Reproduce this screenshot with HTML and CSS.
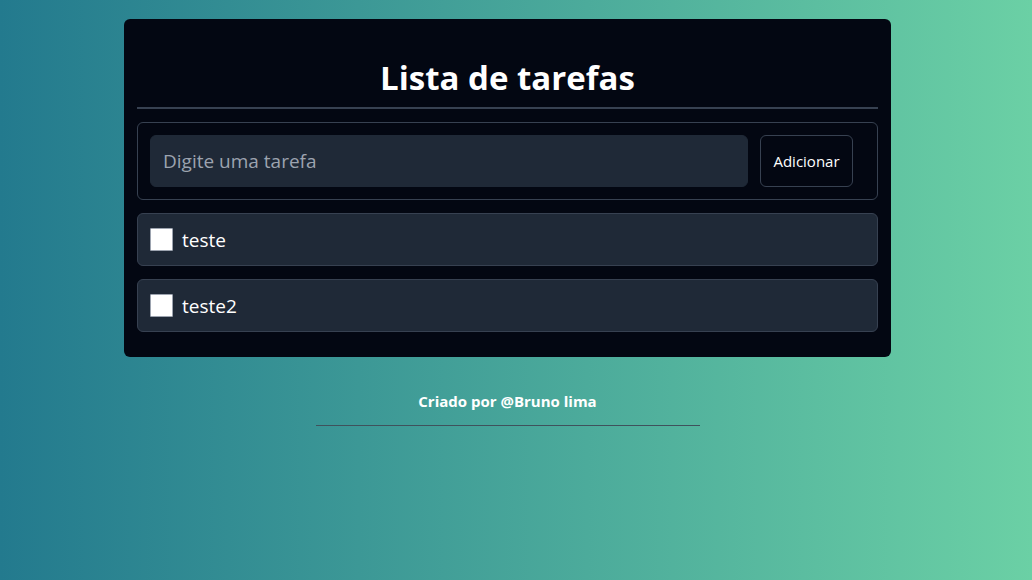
FILE: index.html
```html
<!DOCTYPE html>
<html lang="pt-BR">
<head>
<meta charset="utf-8">
<title>Lista de tarefas</title>
<link rel="stylesheet" href="styles.css">
</head>
<body>
<main class="page">
  <section class="card">
    <h1 class="title">Lista de tarefas</h1>
    <form class="form">
      <input class="input" type="text" placeholder="Digite uma tarefa">
      <button class="btn" type="button">Adicionar</button>
    </form>
    <ul class="list">
      <li class="item"><span class="check"></span><span class="label">teste</span></li>
      <li class="item"><span class="check"></span><span class="label">teste2</span></li>
    </ul>
  </section>
  <footer class="footer">
    <p class="credit">Criado por @Bruno lima</p>
    <hr class="rule">
  </footer>
</main>
</body>
</html>
```
FILE: styles.css
```css
* { box-sizing: border-box; }
html, body { margin: 0; height: 100%; }
body {
  font-family: "Open Sans", "Noto Sans", sans-serif;
  background: linear-gradient(to right, #237a8e, #6bd0a5);
  color: #fff;
}
.page {
  display: flex;
  flex-direction: column;
  align-items: center;
  padding: 19px 17px 0 0;
}
.card {
  width: 767px;
  background: #030712;
  border-radius: 6px;
  padding: 0 13px 25px;
}
.title {
  margin: 0;
  padding: 37px 0 7px;
  text-align: center;
  font-size: 33px;
  font-weight: 700;
  line-height: 44px;
  border-bottom: 2px solid #374151;
}
.form {
  margin-top: 13px;
  display: flex;
  gap: 12px;
  padding: 12px 24px 12px 12px;
  border: 1px solid #374151;
  border-radius: 6px;
}
.input {
  flex: 1;
  height: 52px;
  background: #1f2937;
  border: 1px solid #1f2937;
  border-radius: 6px;
  padding: 0 12px;
  font-family: inherit;
  font-size: 19px;
  color: #fff;
  outline: none;
}
.input::placeholder { color: #9ca3af; }
.btn {
  width: 93px;
  height: 52px;
  background: transparent;
  border: 1px solid #374151;
  border-radius: 6px;
  color: #fff;
  font-family: inherit;
  font-size: 15px;
  padding: 0;
}
.list {
  list-style: none;
  margin: 13px 0 0;
  padding: 0;
  display: flex;
  flex-direction: column;
  gap: 13px;
}
.item {
  height: 53px;
  display: flex;
  align-items: center;
  gap: 9px;
  padding: 0 12px;
  background: #1f2937;
  border: 1px solid #374151;
  border-radius: 6px;
}
.check {
  width: 23px;
  height: 23px;
  background: #fff;
  border: 1px solid #9ca3af;
  border-radius: 1px;
  margin-top: -1px;
}
.label {
  font-size: 19px;
}
.footer {
  margin-top: 32px;
  width: 384px;
  text-align: center;
}
.credit {
  margin: 0;
  font-size: 15px;
  font-weight: 700;
  line-height: 24px;
}
.rule {
  margin: 12px 0 0;
  border: 0;
  border-top: 1px solid #3f525c;
}
```
